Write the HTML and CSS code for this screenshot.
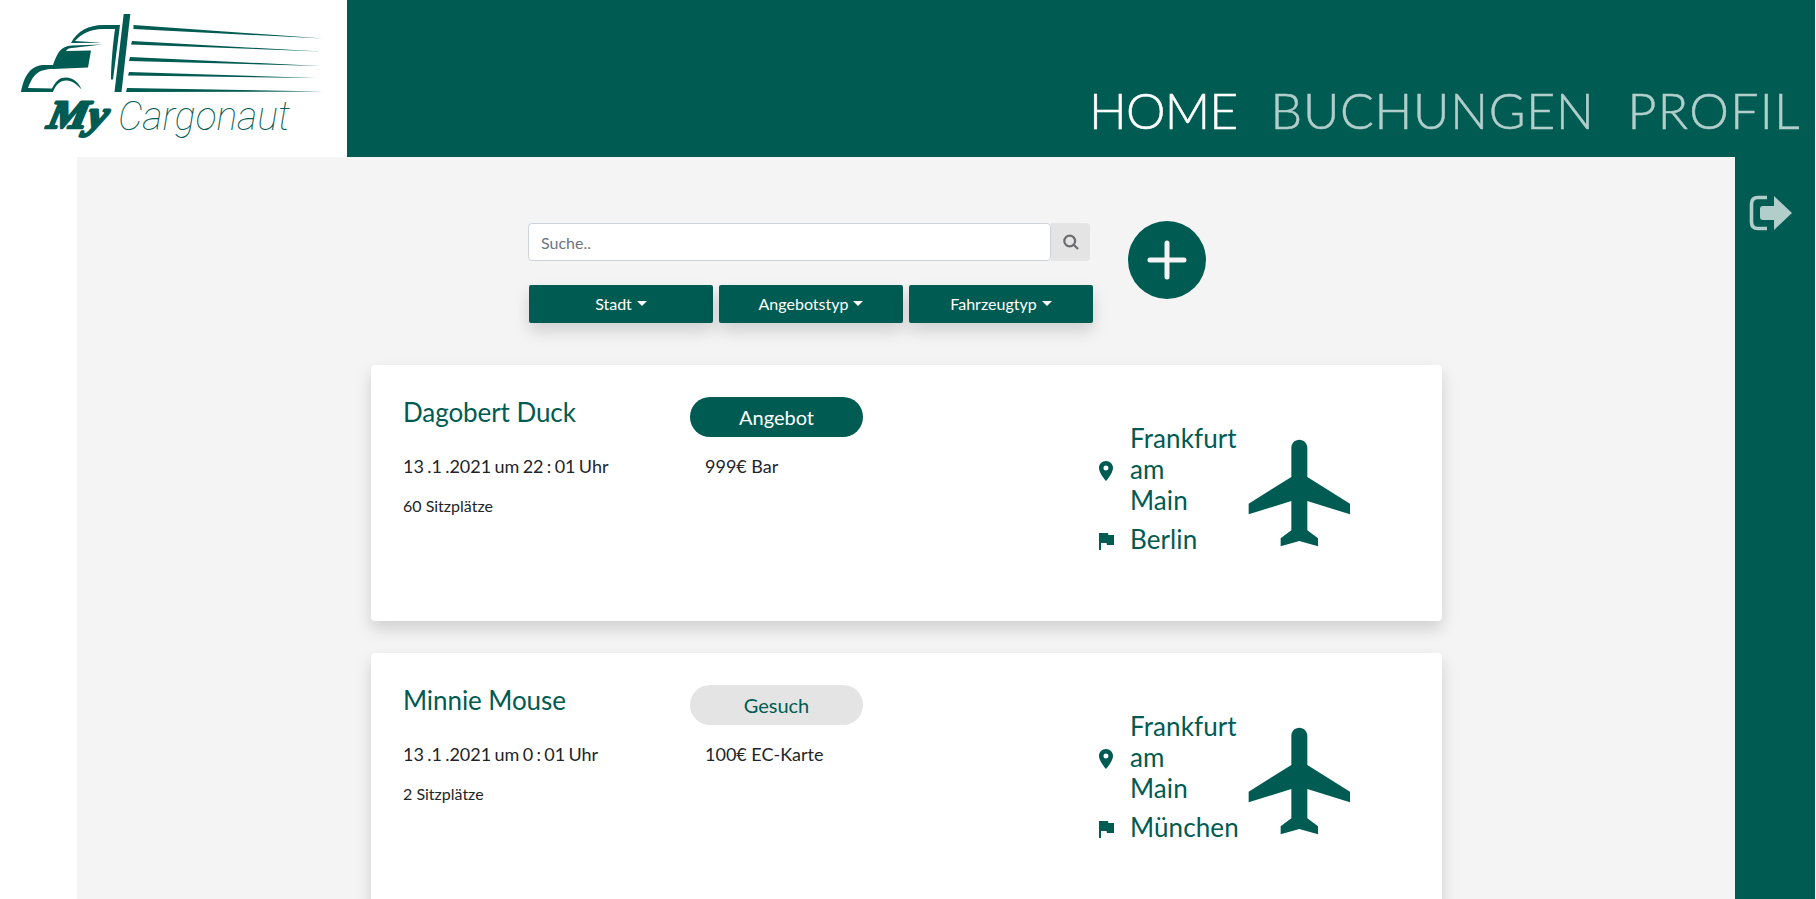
FILE: index.html
```html
<!DOCTYPE html>
<html lang="de">
<head>
<meta charset="utf-8">
<title>My Cargonaut</title>
<link rel="stylesheet" href="styles.css">
</head>
<body>
<header class="header">
  <a class="logo">
    <svg class="logo-art" viewBox="0 0 347 157" width="347" height="157">
      <g fill="#005b52">
        <path d="M123.700 14h6.600L121.500 92h-7z"/>
        <path d="M133.500 25l190 13.500-190-9.500zM132 41l189 10.500-190-7zM130 57l190 9-191-5zM129 72l188 6-189-2.500zM127 88l196 3.500-197 .5z"/>
        <path d="M71 43C77 31 89 25 103 25h17l-7 54.500h-2C111 65 113 43 115 29h-12c-13 0-22 5-28 12l27 1.700z"/>
        <path d="M53 65C57 54 60 46 72 45.500l30-1-30 3.500c-3 0-5 1-6 3l25-.5-3 17-35 1.500C38 69 33 75 28 88l24 .5c4-8 8-11 14-11 7 0 13 5 15.500 12C77 84 71 80 66 80.500c-6 0-10 4-13 11.500H21c3-16 9-26 22-27z"/>
      </g>
      <text class="logo-my" transform="translate(46 128) skewX(-12)" textLength="60" lengthAdjust="spacingAndGlyphs">My</text>
      <text class="logo-name" x="118" y="130" textLength="172" lengthAdjust="spacingAndGlyphs">Cargonaut</text>
    </svg>
  </a>
  <nav class="nav">
    <a class="nav-link active">HOME</a>
    <a class="nav-link buchungen">BUCHUNGEN</a>
    <a class="nav-link profil">PROFIL</a>
  </nav>
</header>
<div class="body">
  <main class="content">
    <section class="toolbar">
      <div class="filters">
        <div class="search">
          <input class="search-input" placeholder="Suche..">
          <button class="search-button"><svg width="16" height="16" viewBox="0 0 16 16" fill="none" stroke="#6c6c70" stroke-width="2.200"><circle cx="6.700" cy="7" r="5.400"/><path d="M10.500 10.500l4.500 4.500"/></svg></button>
        </div>
        <div class="dropdowns">
          <button class="dropdown">Stadt</button>
          <button class="dropdown">Angebotstyp</button>
          <button class="dropdown">Fahrzeugtyp</button>
        </div>
      </div>
      <button class="add"><svg width="78" height="78" viewBox="0 0 78 78" stroke="#f4f4f4" stroke-width="5" stroke-linecap="round"><path d="M39 22v34M22 39h34"/></svg></button>
    </section>
    <article class="card">
      <div class="who"><h2 class="name">Dagobert Duck</h2><p class="date">13 .1 .2021 um 22 : 01 Uhr</p><p class="seats">60 Sitzplätze</p></div>
      <div class="offer"><span class="badge offering">Angebot</span><p class="price">999€ Bar</p></div>
      <div class="route">
        <div class="stop"><svg class="pin" width="24" height="24" viewBox="0 0 24 24"><path d="M12 2C8.130 2 5 5.130 5 9c0 5.250 7 13 7 13s7-7.750 7-13c0-3.870-3.130-7-7-7zm0 9.500a2.500 2.500 0 1 1 0-5 2.500 2.500 0 0 1 0 5z"/></svg><span class="city">Frankfurt<br>am<br>Main</span></div>
        <div class="stop"><svg class="pin" width="24" height="24" viewBox="0 0 24 24"><path d="M14.400 6L14 4H5v17h2v-7h5.600l.4 2h7V6z"/></svg><span class="city">Berlin</span></div>
      </div>
      <svg class="plane" width="128" height="128" viewBox="0 0 24 24"><path d="M21 16v-2l-8-5V3.500c0-.83-.67-1.500-1.500-1.500S10 2.670 10 3.500V9l-8 5v2l8-2.500V19l-2 1.500V22l3.500-1 3.500 1v-1.500L13 19v-5.500l8 2.500z"/></svg>
    </article>
    <article class="card">
      <div class="who"><h2 class="name">Minnie Mouse</h2><p class="date">13 .1 .2021 um 0 : 01 Uhr</p><p class="seats">2 Sitzplätze</p></div>
      <div class="offer"><span class="badge">Gesuch</span><p class="price">100€ EC-Karte</p></div>
      <div class="route">
        <div class="stop"><svg class="pin" width="24" height="24" viewBox="0 0 24 24"><path d="M12 2C8.130 2 5 5.130 5 9c0 5.250 7 13 7 13s7-7.750 7-13c0-3.870-3.130-7-7-7zm0 9.500a2.500 2.500 0 1 1 0-5 2.500 2.500 0 0 1 0 5z"/></svg><span class="city">Frankfurt<br>am<br>Main</span></div>
        <div class="stop"><svg class="pin" width="24" height="24" viewBox="0 0 24 24"><path d="M14.400 6L14 4H5v17h2v-7h5.600l.4 2h7V6z"/></svg><span class="city">München</span></div>
      </div>
      <svg class="plane" width="128" height="128" viewBox="0 0 24 24"><path d="M21 16v-2l-8-5V3.500c0-.83-.67-1.500-1.500-1.500S10 2.670 10 3.500V9l-8 5v2l8-2.500V19l-2 1.500V22l3.500-1 3.500 1v-1.500L13 19v-5.500l8 2.500z"/></svg>
    </article>
  </main>
  <aside class="side">
    <svg width="44" height="36" viewBox="0 0 44 36"><path d="M18 2.500H9Q2.500 2.500 2.500 9v18q0 6.500 6.500 6.500h9" fill="none" stroke="#b2cecb" stroke-width="3.600"/><path d="M25 1l18 17-18 17V25H14q-3 0-3-3v-8q0-3 3-3h11z" fill="#b2cecb"/></svg>
  </aside>
</div>
</body>
</html>
```
FILE: styles.css
```css
* { box-sizing: border-box; }
body { margin: 0; padding-right: 1px; height: 899px; overflow: hidden; background: #fff; color: #212529; font: 400 16px/1.5 Lato, sans-serif; }
h2, p { margin: 0; font-weight: 400; }
button { border: 0; padding: 0; font: inherit; }
.header { display: flex; height: 157px; background: #005b52; }
.logo { width: 347px; background: #fff; }
.logo-art { display: block; }
.logo-my { font: italic 700 40px "Liberation Serif", serif; fill: #005b52; stroke: #005b52; stroke-width: 2.5px; stroke-linejoin: round; }
.logo-name { font: italic 100 40px Roboto, sans-serif; fill: #005b52; }
.nav { flex: 1; display: flex; justify-content: flex-end; padding: 79px 14px 0 0; }
.nav-link { font-size: 50px; line-height: 62px; font-weight: 300; color: #b2cecb; white-space: nowrap; -webkit-text-stroke: .5px; }
.nav-link.active { color: #fff; letter-spacing: -.8px; margin-right: 33px; }
.buchungen { letter-spacing: .75px; margin-right: 33px; }
.profil { letter-spacing: 1.4px; }
.body { display: flex; height: 742px; padding-left: 77px; }
.content { flex: 1; background: #f4f4f4; overflow: hidden; padding: 64px 0 0 294px; }
.side { width: 80px; background: #005b52; padding: 38px 0 0 14px; }
.toolbar { display: flex; height: 144px; padding-left: 157px; }
.filters { width: 566px; padding-top: 2px; }
.search { display: flex; width: 562px; height: 38px; }
.search-input { width: 523px; height: 38px; border: 1px solid #ced4da; border-radius: 4px; padding: 0 12px; background: #fff; font: 16px Lato, sans-serif; }
.search-input::placeholder { color: #6c757d; }
.search-button { width: 39px; background: #e4e4e4; border-radius: 0 4px 4px 0; display: grid; place-items: center; }
.dropdowns { display: flex; gap: 6px; padding: 24px 0 0 1px; }
.dropdown { width: 184px; height: 38px; border-radius: 2px; background: #005b52; color: #fff; box-shadow: 0 8px 16px rgba(0,0,0,.15); }
.dropdown::after { content: ""; display: inline-block; margin-left: 5px; vertical-align: 4px; border-top: 5px solid; border-left: 5px solid transparent; border-right: 5px solid transparent; }
.add { width: 78px; height: 78px; margin-left: 34px; border-radius: 50%; background: #005b52; }
.card { display: flex; width: 1071px; height: 256px; margin-bottom: 32px; padding: 32px; border-radius: 4px; background: #fff; box-shadow: 0 8px 16px rgba(0,0,0,.15); }
.who { width: 287px; }
.name { color: #005b52; font-size: 26px; line-height: 31px; letter-spacing: -.08px; }
.date, .price { font-size: 18px; line-height: 27px; }
.date { margin-top: 25px; word-spacing: -1.3px; }
.seats { margin-top: 14px; line-height: 24px; }
.offer { width: 404px; }
.badge { display: block; width: 173px; height: 40px; border-radius: 20px; background: #e4e4e4; color: #005b52; font-size: 20px; line-height: 40px; text-align: center; }
.badge.offering { background: #005b52; color: #fff; }
.price { margin: 16px 0 0 15px; }
.route { width: 144px; padding-top: 26px; color: #005b52; }
.stop { display: flex; align-items: center; margin-bottom: 8px; }
.city { width: 110px; margin-left: 12px; font-size: 26px; line-height: 31px; letter-spacing: .1px; }
.pin { flex: none; margin-top: 2px; fill: #005b52; }
.plane { fill: #005b52; margin: 32px 0 0 0; }
```
